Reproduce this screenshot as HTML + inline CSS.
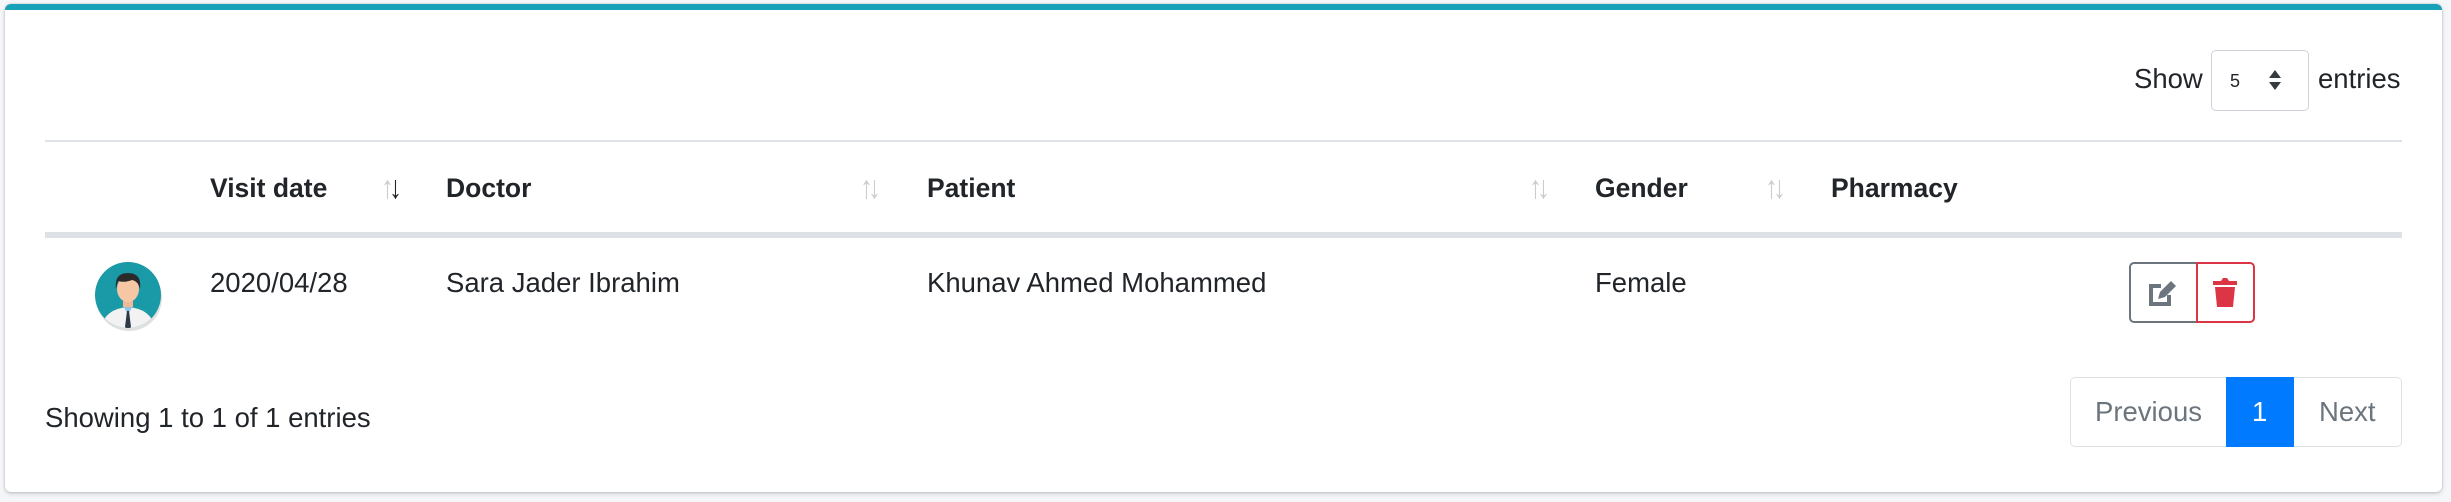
<!DOCTYPE html>
<html><head><style>
body{margin:0;width:2451px;height:502px;background:#f4f6f9;font-family:"Liberation Sans",Roboto,sans-serif;color:#212529;position:relative;overflow:hidden}
.card{position:absolute;left:5px;top:4px;width:2437px;height:488px;background:#fff;border-top:6px solid #17a2b8;border-radius:6px;box-shadow:0 0 2px rgba(0,0,0,.2),0 2px 4px rgba(0,0,0,.15);box-sizing:border-box}
.a{position:absolute;white-space:nowrap;font-size:27.5px;line-height:30px}
.b{font-weight:bold;font-size:26.5px}
.line{position:absolute;left:45px;width:2357px;background:#dee2e6}
.arr{position:absolute;font-size:32px;color:#ccc;letter-spacing:-6px;transform:scaleX(.8);transform-origin:left}
</style></head><body>
<div class="card"></div>
<div class="a" style="left:2134px;top:64px">Show</div>
<div style="position:absolute;left:2211px;top:50px;width:98px;height:61px;border:1px solid #ced4da;border-radius:5px;box-sizing:border-box"></div>
<div class="a" style="left:2230px;top:66px;font-size:18px">5</div>
<svg style="position:absolute;left:2267px;top:69px" width="16" height="22" viewBox="0 0 16 22"><path d="M8 1L14 9H2Z M8 21L14 13H2Z" fill="#343a40"/></svg>
<div class="a" style="left:2318px;top:64px">entries</div>
<div class="line" style="top:140px;height:2px"></div>
<div class="a b" style="left:210px;top:173px">Visit date</div>
<div class="a b" style="left:446px;top:173px">Doctor</div>
<div class="a b" style="left:927px;top:173px">Patient</div>
<div class="a b" style="left:1595px;top:173px">Gender</div>
<div class="a b" style="left:1831px;top:173px">Pharmacy</div>
<div class="arr" style="left:381px;top:169px"><span>↑</span><span style="color:#222">↓</span></div>
<div class="arr" style="left:860px;top:169px">↑↓</div>
<div class="arr" style="left:1529px;top:169px">↑↓</div>
<div class="arr" style="left:1765px;top:169px">↑↓</div>
<div class="line" style="top:232px;height:6px"></div>
<svg style="position:absolute;left:92px;top:259px" width="74" height="74" viewBox="0 0 74 74">
<defs><clipPath id="c"><circle cx="36" cy="36" r="33"/></clipPath></defs>
<circle cx="37" cy="39" r="33" fill="#000" opacity=".12"/>
<circle cx="36" cy="36" r="33" fill="#1a99a6"/>
<g clip-path="url(#c)">
<path d="M8 74 Q10 50 36 48 Q62 50 64 74Z" fill="#f2f2f2"/>
<path d="M31 46h10l-5 10z" fill="#8fc3e6"/>
<path d="M35 52h2l2 16-3 3-3-3z" fill="#2d3a45"/>
<rect x="31" y="38" width="10" height="10" fill="#f0b998"/>
<ellipse cx="36" cy="30" rx="11" ry="13" fill="#f7c6a5"/>
<path d="M24 30 Q22 14 36 14 Q50 14 48 30 Q46 22 40 21 Q32 24 26 22Z" fill="#2b2b2b"/>
</g></svg>
<div class="a" style="left:210px;top:268px">2020/04/28</div>
<div class="a" style="left:446px;top:268px">Sara Jader Ibrahim</div>
<div class="a" style="left:927px;top:268px">Khunav Ahmed Mohammed</div>
<div class="a" style="left:1595px;top:268px">Female</div>
<div style="position:absolute;left:2129px;top:262px;width:67px;height:61px;border:2px solid #6c757d;border-right:none;border-radius:5px 0 0 5px;box-sizing:border-box"></div>
<div style="position:absolute;left:2196px;top:262px;width:59px;height:61px;border:2px solid #dc3545;border-radius:0 5px 5px 0;box-sizing:border-box"></div>
<svg style="position:absolute;left:2147px;top:278px" width="32" height="30" viewBox="0 0 32 30"><path d="M2 6h12v4H6v14h14v-7h4v11H2z" fill="#6c757d"/><path d="M11 21l2-7 11-11 5 5-11 11z" fill="#6c757d"/></svg>
<svg style="position:absolute;left:2211px;top:277px" width="28" height="32" viewBox="0 0 28 32"><path d="M2 4h8l2-3h4l2 3h8v4H2z M4 10h20l-2 20H6z" fill="#dc3545"/></svg>
<div class="a" style="left:45px;top:403px">Showing 1 to 1 of 1 entries</div>
<div style="position:absolute;left:2070px;top:377px;width:332px;height:70px;border:1px solid #dee2e6;border-radius:5px;box-sizing:border-box"></div>
<div style="position:absolute;left:2226px;top:377px;width:68px;height:70px;background:#007bff"></div>
<div class="a" style="left:2095px;top:397px;color:#6c757d">Previous</div>
<div class="a" style="left:2252px;top:397px;color:#fff">1</div>
<div class="a" style="left:2319px;top:397px;color:#6c757d">Next</div>
</body></html>
